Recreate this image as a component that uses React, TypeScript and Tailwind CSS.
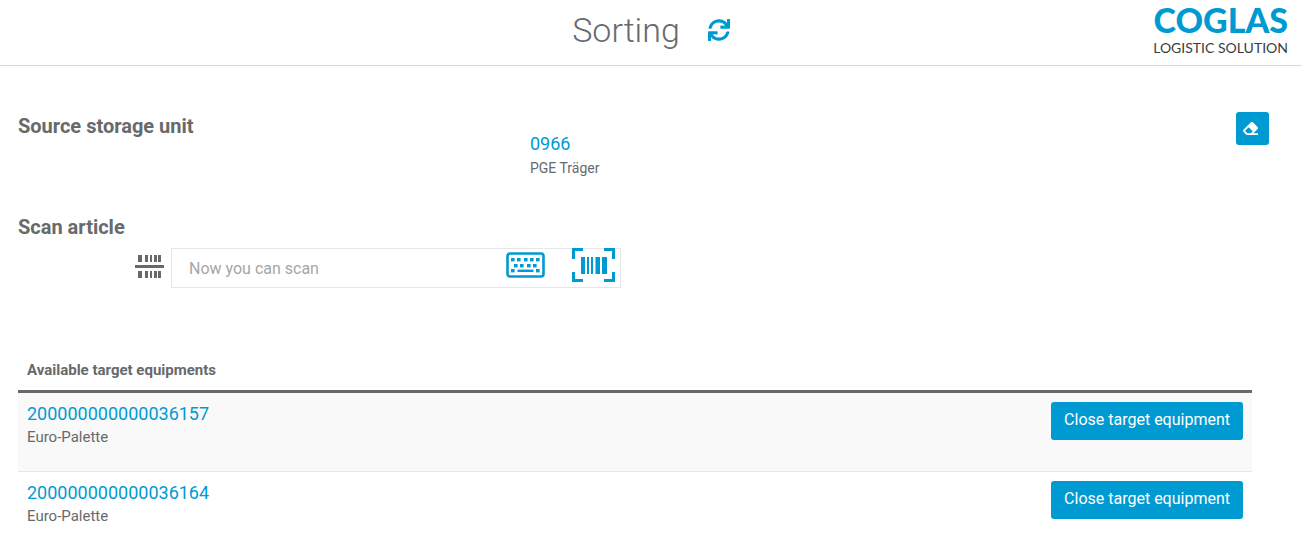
import React from "react";
import { FaSync, FaEraser } from "react-icons/fa";

const equipments = [
  { id: "200000000000036157", type: "Euro-Palette" },
  { id: "200000000000036164", type: "Euro-Palette" },
];

function Logo() {
  return (
    <div className="flex flex-col items-end whitespace-nowrap">
      <span className="font-['Lato','Open_Sans',sans-serif] text-[34px] leading-[40px] font-black text-[#009ad3]">COGLAS</span>
      <span className="font-['Lato','Open_Sans',sans-serif] text-[14px] leading-[16px] text-[#3c3c3b]">LOGISTIC SOLUTION</span>
    </div>
  );
}

function ScanLineIcon() {
  const bars = [
    [3, 4],
    [10, 3],
    [15, 2],
    [19, 3],
    [23, 3],
  ];
  return (
    <svg width="29" height="24" viewBox="0 0 29 24" fill="currentColor" aria-hidden="true">
      {bars.map(([x, w]) => (
        <React.Fragment key={x}>
          <rect x={x} y="0" width={w} height="7" />
          <rect x={x} y="16" width={w} height="7" />
        </React.Fragment>
      ))}
      <rect x="0" y="10" width="29" height="3" />
    </svg>
  );
}

function KeyboardIcon() {
  const keys = [
    [5, 6], [11, 6], [18, 6], [24, 6], [30, 6],
    [8, 12], [14, 12], [21, 12], [27, 12],
    [5, 17], [30, 17],
  ];
  return (
    <svg width="39" height="26" viewBox="0 0 39 26" fill="currentColor" aria-hidden="true">
      <rect x="1.5" y="1.5" width="36" height="23" rx="2.5" fill="none" stroke="currentColor" strokeWidth="2.6" />
      {keys.map(([x, y]) => (
        <rect key={`${x}-${y}`} x={x} y={y} width="3.6" height="3.4" />
      ))}
      <rect x="11.5" y="17.6" width="16" height="2.4" />
    </svg>
  );
}

function BarcodeIcon() {
  return (
    <svg width="43" height="34" viewBox="0 0 43 34" fill="currentColor" aria-hidden="true">
      <path d="M1.5 11V1.5H11M32 1.5h9.5V11M41.5 24v8.5H32M11 32.5H1.5V24" fill="none" stroke="currentColor" strokeWidth="3" />
      <path d="M9 9h4v17H9zM15 9h2v17h-2zM19 9h2v17h-2zM23.5 9h4.5v17h-4.5zM30 9h5v17h-5z" />
    </svg>
  );
}

export default function App() {
  return (
    <div className="min-h-screen bg-white font-['Roboto','Open_Sans',sans-serif] text-[14px] leading-5 text-[#676a6c]">
      <header className="grid h-[66px] grid-cols-[1fr_auto_1fr] items-start border-b border-[#d9d9d9] px-[14px]">
        <div className="col-start-2 flex h-[60px] items-center gap-7">
          <h1 className="text-[34px] leading-10 font-light">Sorting</h1>
          <button type="button" aria-label="Refresh" className="text-[#009ad3]">
            <FaSync size={22} />
          </button>
        </div>
        <div className="justify-self-end">
          <Logo />
        </div>
      </header>

      <main className="pl-[18px]">
        <section className="flex items-start pt-[46px] pr-[33px]">
          <h2 className="w-[512px] shrink-0 pt-[2px] text-[20px] leading-6 font-bold">Source storage unit</h2>
          <div className="grow pt-5">
            <a href="#0966" className="block text-[18px] leading-6 text-[#009ad3]">0966</a>
            <p className="leading-6">PGE Träger</p>
          </div>
          <button type="button" aria-label="Clear source storage unit" className="flex size-[33px] items-center justify-center rounded-[3px] bg-[#009ad3] pr-[4px] text-white">
            <FaEraser size={15} />
          </button>
        </section>

        <section className="pt-[35px]">
          <label htmlFor="article" className="block text-[20px] leading-6 font-bold">Scan article</label>
          <div className="mt-[9px] flex items-start pl-[117px]">
            <div className="w-9 pt-[7px]">
              <ScanLineIcon />
            </div>
            <div className="grid w-[450px] grid-cols-1 grid-rows-1">
              <input id="article" type="text" placeholder="Now you can scan" className="col-start-1 row-start-1 h-10 w-full border border-[#e5e6e7] bg-white pr-32 pl-[17px] text-[16px] text-[#676a6c] outline-none placeholder:text-[#a6a6a6]" />
              <div className="col-start-1 row-start-1 flex h-[34px] items-center gap-[27px] justify-self-end pr-[6px] text-[#009ad3]">
                <button type="button" aria-label="Open keyboard"><KeyboardIcon /></button>
                <button type="button" aria-label="Scan with camera"><BarcodeIcon /></button>
              </div>
            </div>
          </div>
        </section>

        <section className="pt-[62px] pr-[50px]">
          <table className="w-full border-collapse text-left text-[15px]">
            <thead>
              <tr className="border-b-[3px] border-[#676a6c]">
                <th colSpan={2} className="h-[41px] px-[9px] font-bold">Available target equipments</th>
              </tr>
            </thead>
            <tbody>
              {equipments.map((item) => (
                <tr key={item.id} className="h-20 border-b border-[#e5e6e7] align-top odd:bg-[#f9f9f9]">
                  <td className="px-[9px] pt-[9px]">
                    <a href={`#${item.id}`} className="block text-[18px] leading-6 text-[#009ad3]">{item.id}</a>
                    <span className="block leading-[22px]">{item.type}</span>
                  </td>
                  <td className="px-[9px] pt-[9px] text-right">
                    <button type="button" className="h-[38px] rounded-[3px] bg-[#009ad3] px-[13px] pb-[2px] text-[16px] text-white">Close target equipment</button>
                  </td>
                </tr>
              ))}
            </tbody>
          </table>
        </section>
      </main>
    </div>
  );
}
